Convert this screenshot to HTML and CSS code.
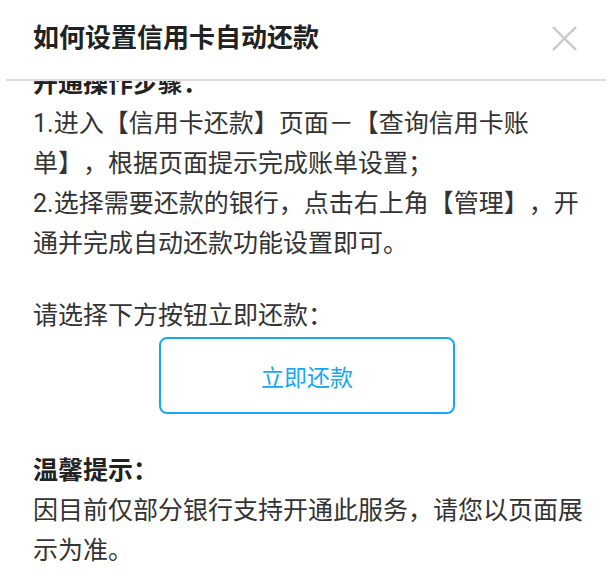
FILE: index.html
```html
<!DOCTYPE html>
<html lang="zh-CN">
<head>
    <meta charset="UTF-8">
    <meta name="viewport" content="width=device-width, initial-scale=1.0">
    <title>如何设置信用卡自动还款</title>
    <link rel="stylesheet" href="styles.css">
</head>
<body>
    <div class="sheet">
        <header class="sheet-header">
            <h1>如何设置信用卡自动还款</h1>
            <button class="close-btn" aria-label="关闭">
                <svg width="25" height="25" viewBox="0 0 25 25">
                    <path d="M1 1 L24 24 M24 1 L1 24" stroke="#c8c8c8" stroke-width="2.4" fill="none"/>
                </svg>
            </button>
        </header>

        <div class="sheet-body">
            <div class="sheet-content">
                <p class="section-title">开通操作步骤：</p>
                <p>1.进入【信用卡还款】页面－【查询信用卡账单】，根据页面提示完成账单设置；</p>
                <p>2.选择需要还款的银行，点击右上角【管理】，开通并完成自动还款功能设置即可。</p>

                <p class="prompt">请选择下方按钮立即还款：</p>
                <button class="pay-btn">立即还款</button>

                <p class="section-title tips">温馨提示：</p>
                <p>因目前仅部分银行支持开通此服务，请您以页面展示为准。</p>
            </div>
        </div>
    </div>
</body>
</html>
```

FILE: styles.css
```css
:root {
    --text: #333333;
    --title: #222222;
    --line: #dddddd;
    --blue: #18a8f3;
}

* {
    margin: 0;
    padding: 0;
    box-sizing: border-box;
}

body {
    font-family: Roboto, "Noto Sans CJK SC", sans-serif;
    background: #ffffff;
    color: var(--text);
    text-spacing-trim: space-all;
}

.sheet {
    height: 587px;
    display: flex;
    flex-direction: column;
    overflow: hidden;
}

.sheet-header {
    height: 81px;
    flex-shrink: 0;
    display: flex;
    align-items: center;
    justify-content: space-between;
    padding: 0 29px 3px 27px;
    margin: 0 2px 0 6px;
    border-bottom: 2px solid var(--line);
}

h1 {
    font-size: 26px;
    font-weight: 700;
    color: var(--title);
    line-height: 1;
}

.close-btn {
    background: none;
    border: none;
    width: 25px;
    height: 25px;
    display: flex;
    cursor: pointer;
}

/* content is scrolled a little, first line sits under the header */
.sheet-body {
    flex: 1;
    overflow: hidden;
}

.sheet-content {
    margin-top: -17px;
    padding: 0 20px 0 33px;
    font-size: 25px;
    line-height: 40px;
}

.section-title {
    font-weight: 700;
    color: var(--title);
}

.prompt {
    margin-top: 32px;
}

.pay-btn {
    display: block;
    width: 296px;
    height: 77px;
    margin: 1px 0 0 126px;
    background: #ffffff;
    border: 2px solid var(--blue);
    border-radius: 8px;
    color: var(--blue);
    font-family: inherit;
    font-size: 23px;
    cursor: pointer;
}

.tips {
    margin-top: 37px;
}
```
